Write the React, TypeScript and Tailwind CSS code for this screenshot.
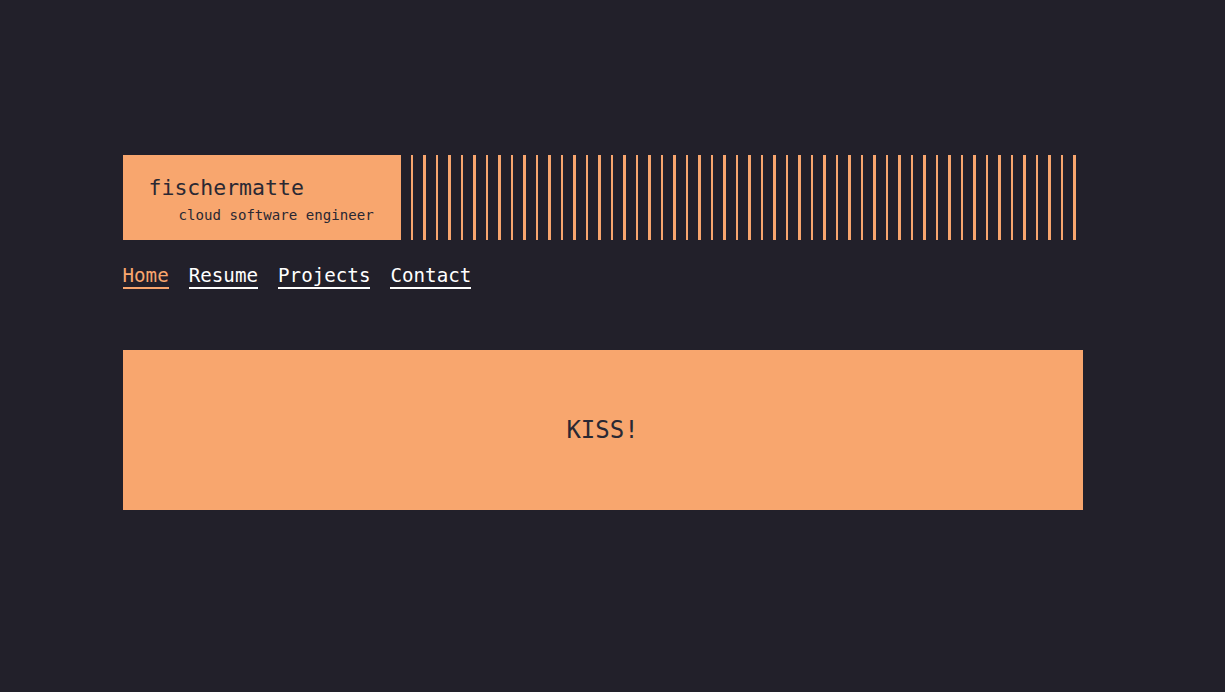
const links = [
    { label: "Home", active: true },
    { label: "Resume", active: false },
    { label: "Projects", active: false },
    { label: "Contact", active: false },
];

const stripes = Array.from({ length: 54 }, (_, i) => i);

export default function App() {
    return (
        <div className="min-h-screen w-full bg-[#22202a] font-['DejaVu_Sans_Mono',monospace] pt-[155px]">
            <div className="ml-[10%] w-[960px]">
                <header className="flex h-[85px]">
                    <div className="w-[278px] bg-[#f8a66e] text-[#2a2833] pl-[26px] pt-[20px]">
                        <div className="text-[21.5px] leading-[26px]">fischermatte</div>
                        <div className="mt-[5px] pl-[30px] text-[14.1px] leading-[18px]">cloud software engineer</div>
                    </div>
                    <div className="flex-1 ml-[10px] flex gap-[10px]">
                        {stripes.map((i) => (
                            <div key={i} className="w-[2.5px] h-full bg-[#f8a66e]" />
                        ))}
                    </div>
                </header>
                <nav className="mt-[24px] flex gap-[20px] text-[19.2px] leading-[23px]">
                    {links.map((l) => (
                        <a
                            key={l.label}
                            href="#"
                            className={l.active ? "text-[#f8a66e] border-b-2 border-[#f8a66e]" : "text-white border-b-2 border-white"}
                        >
                            {l.label}
                        </a>
                    ))}
                </nav>
                <main className="mt-[61px] h-[160px] bg-[#f8a66e] flex items-center justify-center">
                    <p className="text-[24px] leading-[30px] text-[#2a2833]">KISS!</p>
                </main>
            </div>
        </div>
    );
}
